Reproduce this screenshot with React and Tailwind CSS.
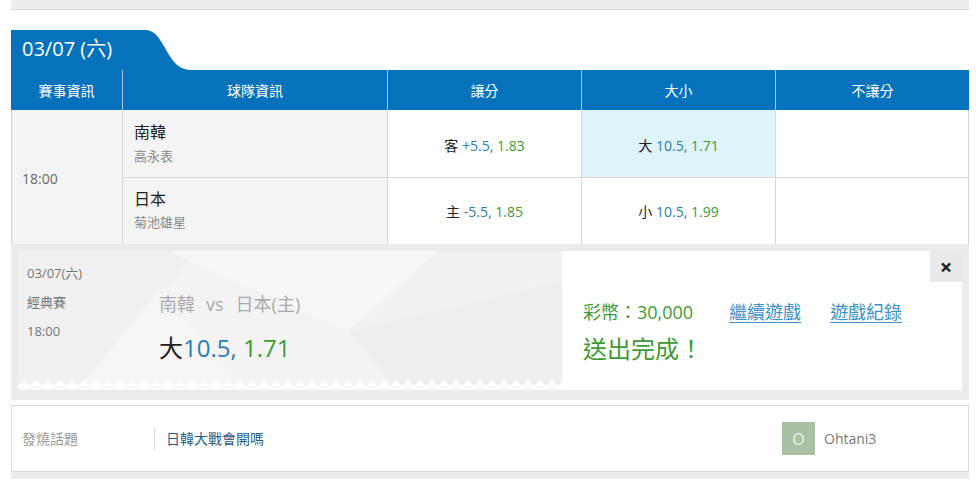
import React from 'react';

const BLUE = 'bg-[#0672bc]';

const teeth = Array.from({ length: 46 });

/* faint geometric ticket background with a torn bottom edge */
const TicketBg = () => (
  <svg className="absolute inset-0" width="544" height="139" viewBox="0 0 544 139">
    <rect x="0" y="0" width="544" height="139" fill="#f3f3f3" />
    <polygon points="0,0 180,0 60,139 0,139" fill="#f0f0f0" />
    <polygon points="150,0 420,0 330,80" fill="#f6f6f6" />
    <polygon points="330,80 544,30 544,139 380,139" fill="#efefef" />
    <polygon points="60,139 140,40 230,139" fill="#f5f5f5" />
    <polygon points="420,0 544,0 544,30 330,80" fill="#f1f1f1" />
    {teeth.map((_, i) => (
      <polygon
        key={i}
        points={`${i * 12},135 ${i * 12 + 6},129 ${i * 12 + 12},135`}
        fill="#ffffff"
      />
    ))}
    <rect x="0" y="135" width="544" height="4" fill="#fafafa" />
  </svg>
);

const Odds = ({ label, line, price }) => (
  <span className="text-[14px]">
    <span className="text-[#222]">{label}</span>{' '}
    <span className="text-[#2b7bb5]">{line},</span>{' '}
    <span className="text-[#3d9a34]">{price}</span>
  </span>
);

export default function App() {
  return (
    <div
      className="w-[980px] h-[483px] bg-white overflow-hidden"
      style={{ fontFamily: '"Open Sans", "Noto Sans CJK TC", sans-serif' }}
    >
      <div className="ml-[11px] w-[958px]">
        {/* previous panel's bottom edge */}
        <div className="h-[10px] bg-[#ededed] border-b border-[#d9d9d9]" />

        {/* date tab */}
        <div className="flex h-[40px] mt-[20px]">
          <div className={`w-[132px] ${BLUE} text-white text-[20px] pl-[11px] pb-[3px] flex items-center`}>
            03/07 (六)
          </div>
          <svg width="50" height="40" viewBox="0 0 50 40" className="block">
            <path d="M0 0 H2 C12 0 16 8 22 18 C30 32 35 40 50 40 H0 Z" fill="#0672bc" />
          </svg>
        </div>

        {/* header */}
        <div className={`grid grid-cols-[111px_265px_194px_194px_194px] h-[40px] ${BLUE} text-white text-[14px]`}>
          <div className="flex items-center justify-center">賽事資訊</div>
          <div className="flex items-center justify-center border-l border-[#9fcbea]">球隊資訊</div>
          <div className="flex items-center justify-center border-l border-[#9fcbea]">讓分</div>
          <div className="flex items-center justify-center border-l border-[#9fcbea]">大小</div>
          <div className="flex items-center justify-center border-l border-[#9fcbea]">不讓分</div>
        </div>

        {/* match rows */}
        <div className="flex border-r border-[#d6d6d6]">
          <div className="w-[111px] h-[134px] bg-[#f4f4f4] border-l border-[#d3d3d3] flex items-center pl-[10px] pt-[2px] text-[14px] text-[#666]">
            18:00
          </div>
          <div className="flex-1">
            <div className="grid grid-cols-[265px_194px_194px_193px] h-[68px] border-b border-[#d6d6d6]">
              <div className="bg-[#f4f4f4] border-l border-[#d6d6d6] pl-[11px] pt-[11px]">
                <div className="text-[16px] leading-[22px] text-[#222]">南韓</div>
                <div className="text-[13px] leading-[20px] text-[#888] mt-[3px]">高永表</div>
              </div>
              <div className="border-l border-[#d6d6d6] flex items-center justify-center pt-[3px]">
                <Odds label="客" line="+5.5" price="1.83" />
              </div>
              <div className="border-l border-[#d6d6d6] bg-[#dff3fb] flex items-center justify-center pt-[3px]">
                <Odds label="大" line="10.5" price="1.71" />
              </div>
              <div className="border-l border-[#d6d6d6]" />
            </div>
            <div className="grid grid-cols-[265px_194px_194px_193px] h-[66px]">
              <div className="bg-[#f4f4f4] border-l border-[#d6d6d6] pl-[11px] pt-[10px]">
                <div className="text-[16px] leading-[22px] text-[#222]">日本</div>
                <div className="text-[13px] leading-[20px] text-[#888] mt-[2px]">菊池雄星</div>
              </div>
              <div className="border-l border-[#d6d6d6] flex items-center justify-center">
                <Odds label="主" line="-5.5" price="1.85" />
              </div>
              <div className="border-l border-[#d6d6d6] flex items-center justify-center">
                <Odds label="小" line="10.5" price="1.99" />
              </div>
              <div className="border-l border-[#d6d6d6]" />
            </div>
          </div>
        </div>

        {/* bet confirmation */}
        <div className="bg-[#ebebeb] pt-[7px] px-[7px] pb-[10px]">
          <div className="relative flex h-[139px] bg-white">
            <div className="relative w-[544px] h-full overflow-hidden">
              <TicketBg />
              <div className="relative flex">
                <div className="w-[141px] pl-[9px] pt-[8px] text-[13px] leading-[29px] text-[#777]">
                  <div>03/07(六)</div>
                  <div>經典賽</div>
                  <div>18:00</div>
                </div>
                <div className="pt-[39px]">
                  <div className="flex text-[18px] leading-[28px] text-[#aaa]">
                    <span>南韓</span>
                    <span className="ml-[11px]">vs</span>
                    <span className="ml-[12px]">日本(主)</span>
                  </div>
                  <div className="text-[24px] leading-[34px] mt-[13px]">
                    <span className="text-[#222]">大</span>
                    <span className="text-[#2b7bb5]">10.5,</span>{' '}
                    <span className="text-[#3d9a34]">1.71</span>
                  </div>
                </div>
              </div>
            </div>
            <div className="pl-[21px] pt-[47px]">
              <div className="flex text-[18px] leading-[28px]">
                <span className="text-[#3d9a34]">彩幣：30,000</span>
                <span className="ml-[36px] text-[#3a92cc] underline underline-offset-[3px]">繼續遊戲</span>
                <span className="ml-[29px] text-[#3a92cc] underline underline-offset-[3px]">遊戲紀錄</span>
              </div>
              <div className="text-[24px] leading-[34px] mt-[6px] text-[#3d9a34]">送出完成！</div>
            </div>
            <button className="absolute top-0 right-0 w-[32px] h-[31px] bg-[#e9e9e9] flex items-center justify-center text-[22px] leading-none font-bold text-[#222] pb-[2px]">
              ×
            </button>
          </div>
        </div>

        {/* hot topic */}
        <div className="mt-[5px] border-t border-x border-[#dcdcdc] h-[66px] flex items-center text-[14px]">
          <div className="w-[142px] pl-[10px] text-[#999]">發燒話題</div>
          <div className="h-[22px] border-l border-[#dddddd]" />
          <div className="pl-[11px] text-[#1f5f8b]">日韓大戰會開嗎</div>
          <div className="ml-auto w-[186px] flex items-center">
            <div className="w-[33px] h-[33px] bg-[#a9c0a3] flex items-center justify-center text-[#eef3ec] text-[16px]">
              O
            </div>
            <span className="ml-[9px] text-[#777]">Ohtani3</span>
          </div>
        </div>
        <div className="h-[8px] bg-[#ececec] border-t border-[#d8d8d8]" />
      </div>
    </div>
  );
}
